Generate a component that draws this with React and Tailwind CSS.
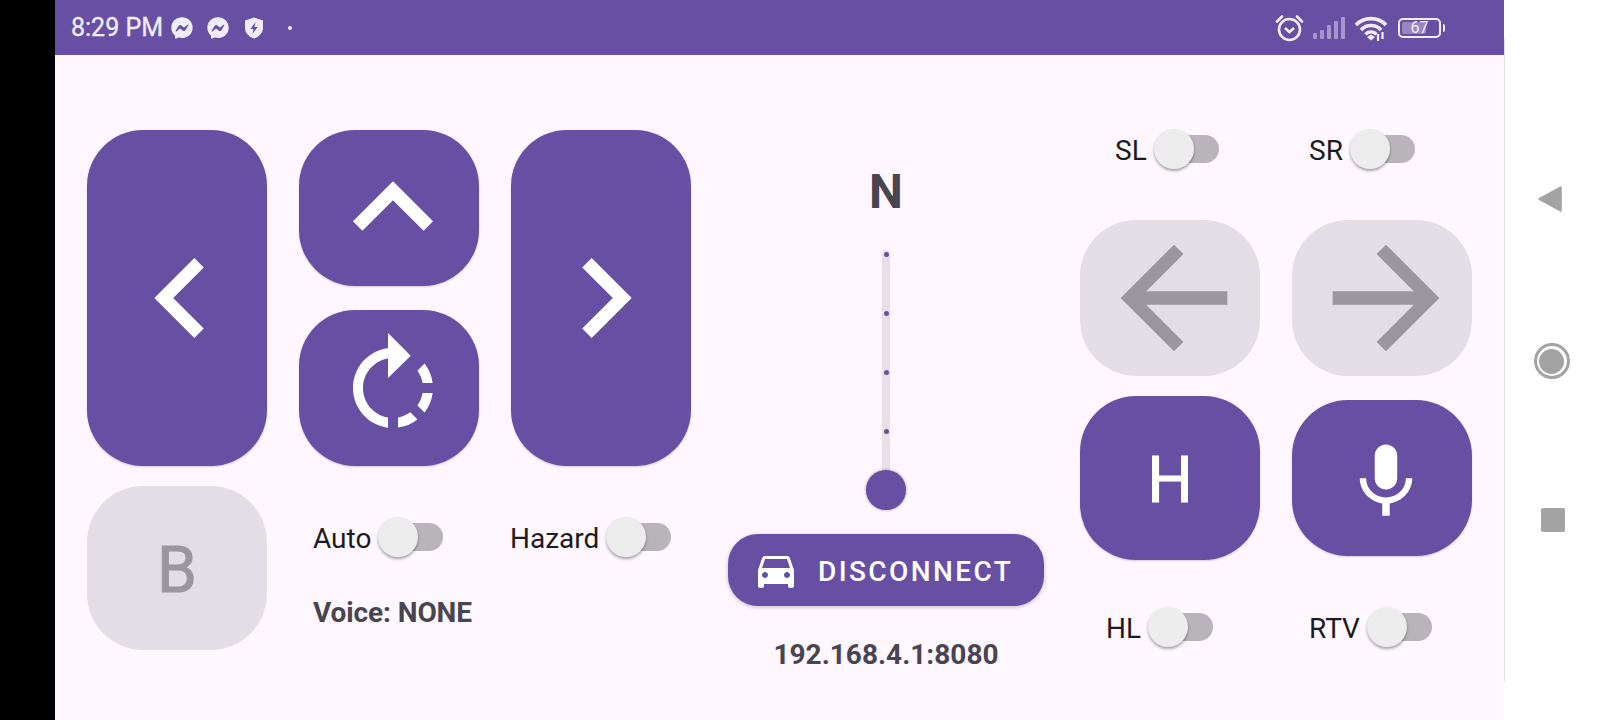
import { FaFacebookMessenger } from 'react-icons/fa';

function Icon({ d, size, className = 'fill-white' }) {
  return (
    <svg viewBox="0 0 24 24" width={size} height={size} className={`shrink-0 ${className}`}>
      <path d={d} />
    </svg>
  );
}

const paths = {
  left: 'M15.41 16.59L10.83 12l4.58-4.59L14 6l-6 6 6 6 1.41-1.41z',
  right: 'M8.59 16.59L13.17 12 8.59 7.41 10 6l6 6-6 6-1.41-1.41z',
  up: 'M7.41 15.41L12 10.83l4.59 4.58L18 14l-6-6-6 6z',
  rotate: 'M15.55 5.55L11 1v3.07C7.06 4.56 4 7.92 4 12s3.05 7.44 7 7.93v-2.02c-2.84-.48-5-2.94-5-5.91s2.16-5.43 5-5.91V10l4.55-4.45zM19.93 11c-.17-1.39-.72-2.73-1.62-3.89l-1.42 1.42c.54.75.88 1.6 1.02 2.47h2.02zM13 17.9v2.02c1.39-.17 2.74-.71 3.9-1.61l-1.44-1.44c-.75.54-1.59.89-2.46 1.03zm3.89-2.42l1.42 1.41c.9-1.16 1.45-2.5 1.62-3.89h-2.02c-.14.87-.48 1.72-1.02 2.48z',
  back: 'M20 11H7.83l5.59-5.59L12 4l-8 8 8 8 1.41-1.41L7.83 13H20v-2z',
  forward: 'M12 4l-1.41 1.41L16.17 11H4v2h12.17l-5.58 5.59L12 20l8-8z',
  mic: 'M12 14c1.66 0 2.99-1.34 2.99-3L15 5c0-1.66-1.34-3-3-3S9 3.34 9 5v6c0 1.66 1.34 3 3 3zm5.3-3c0 3-2.54 5.1-5.3 5.1S6.7 14 6.7 11H5c0 3.41 2.72 6.23 6 6.72V21h2v-3.28c3.28-.48 6-3.3 6-6.72h-1.7z',
  car: 'M18.92 6.01C18.72 5.42 18.16 5 17.5 5h-11c-.66 0-1.21.42-1.42 1.01L3 12v8c0 .55.45 1 1 1h1c.55 0 1-.45 1-1v-1h12v1c0 .55.45 1 1 1h1c.55 0 1-.45 1-1v-8l-2.08-5.99zM6.5 16c-.83 0-1.5-.67-1.5-1.5S5.67 13 6.5 13s1.5.67 1.5 1.5S7.33 16 6.5 16zm11 0c-.83 0-1.5-.67-1.5-1.5s.67-1.5 1.5-1.5 1.5.67 1.5 1.5-.67 1.5-1.5 1.5zM5 11l1.5-4.5h11L19 11H5z',
};

function PadButton({ disabled, className = '', children }) {
  return (
    <div
      className={`w-[180px] flex items-center justify-center rounded-[56px] ${
        disabled ? 'bg-[#e3dee5]' : 'bg-[#6750a4] shadow-[0_1px_2px_rgba(0,0,0,0.18)]'
      } ${className}`}
    >
      {children}
    </div>
  );
}

function Toggle({ label, className = '' }) {
  return (
    <div className={`flex items-center gap-[7px] ${className}`}>
      <span className="translate-y-[2px] text-[28px] leading-[40px] text-[#1d1b20]">{label}</span>
      <div className="relative w-[65px] h-[40px] flex items-center justify-end">
        <div className="w-[45px] h-[28px] rounded-r-full bg-[#b9b4ba]" />
        <div className="absolute left-0 top-0 w-[40px] h-[40px] rounded-full bg-[#ececec] shadow-[0_2px_3px_rgba(0,0,0,0.35)]" />
      </div>
    </div>
  );
}

function StatusBar() {
  return (
    <div className="h-[55px] shrink-0 bg-[#6750a4] flex items-center text-[#f1edf7]">
      <span className="ml-[16px] text-[25px] leading-none w-[100px] whitespace-nowrap [-webkit-text-stroke:0.3px_#f1edf7]">8:29 PM</span>
      <FaFacebookMessenger size={22} className="text-[#f1edf7]" />
      <FaFacebookMessenger size={22} className="text-[#f1edf7] ml-[14px]" />
      <svg viewBox="0 0 20 22" width="20" height="22" className="ml-[16px] -translate-x-px">
        <path d="M10 0.5L19 3.5V11C19 16 15 20 10 21.5C5 20 1 16 1 11V3.5Z" fill="#f1edf7" />
        <path d="M11.5 5L6.5 12H9.5L8.5 17L13.5 10H10.5Z" fill="#6750a4" />
      </svg>
      <div className="ml-[24px] w-[4px] h-[4px] rounded-full bg-[#f1edf7] -translate-x-px" />
      <div className="flex-1" />
      {/* alarm */}
      <svg viewBox="0 0 29 28" width="29" height="28" className="-ml-[2px]">
        <circle cx="14.5" cy="15.5" r="10.5" fill="none" stroke="#f1edf7" strokeWidth="2.6" />
        <path d="M10 14L14.5 18L19 14" fill="none" stroke="#f1edf7" strokeWidth="2.6" />
        <path d="M2 7.5L7 2.5M22 2.5L27 7.5" fill="none" stroke="#f1edf7" strokeWidth="2.6" strokeLinecap="round" />
      </svg>
      {/* signal */}
      <div className="ml-[9px] flex items-end gap-[2.5px] h-[23px] opacity-45">
        <div className="w-[4.5px] h-[6px] bg-[#f1edf7] rounded-[1px]" />
        <div className="w-[4.5px] h-[9px] bg-[#f1edf7] rounded-[1px]" />
        <div className="w-[4.5px] h-[14px] bg-[#f1edf7] rounded-[1px]" />
        <div className="w-[4.5px] h-[18px] bg-[#f1edf7] rounded-[1px]" />
        <div className="w-[4.5px] h-[22px] bg-[#f1edf7] rounded-[1px]" />
      </div>
      {/* wifi */}
      <svg viewBox="0 0 34 26" width="34" height="26" className="ml-[9px]">
        <path d="M2 10C10 1.5 24 1.5 32 10" fill="none" stroke="#f1edf7" strokeWidth="3.6" />
        <path d="M7 15C12 9 22 9 27 15" fill="none" stroke="#f1edf7" strokeWidth="3.6" />
        <path d="M11.5 19.5C14.5 16 19.5 16 22.5 19.5" fill="none" stroke="#f1edf7" strokeWidth="3.4" />
        <path d="M13 22L17 19.5L21 22L17 25.5Z" fill="#f1edf7" />
        <path d="M24 19V26M28.5 17V24" stroke="#f1edf7" strokeWidth="2.2" />
      </svg>
      {/* battery */}
      <div className="ml-[10px] flex items-center mr-[59px]">
        <div className="relative w-[43px] h-[20px] rounded-[5px] border-2 border-[#f1edf7] flex items-center justify-center">
          <div className="absolute left-[2px] top-[2px] bottom-[2px] w-[24px] rounded-[2px] bg-[#f1edf7]/35" />
          <span className="relative text-[16px] leading-none text-[#f1edf7]">67</span>
        </div>
        <div className="ml-[2px] w-[2px] h-[8px] rounded-r-sm bg-[#f1edf7]" />
      </div>
    </div>
  );
}

function LeftPanel() {
  return (
    <div className="ml-[32px] pt-[75px] w-[604px] shrink-0">
      <div className="flex gap-[32px] h-[336px]">
        <PadButton className="pl-2">
          <Icon d={paths.left} size={160} />
        </PadButton>
        <div className="flex flex-col gap-[24px]">
          <PadButton className="h-[156px] pl-2">
            <Icon d={paths.up} size={160} />
          </PadButton>
          <PadButton className="h-[156px] pl-2">
            <Icon d={paths.rotate} size={120} />
          </PadButton>
        </div>
        <PadButton className="pl-2">
          <Icon d={paths.right} size={160} />
        </PadButton>
      </div>
      <div className="flex mt-[20px]">
        <PadButton disabled className="h-[164px]">
          <span className="text-[64px] leading-none text-[#9b969d] pt-[5px] [-webkit-text-stroke:1px_#9b969d]">B</span>
        </PadButton>
        <div className="ml-[46px] pt-[31px]">
          <div className="flex">
            <Toggle label="Auto" className="w-[197px]" />
            <Toggle label="Hazard" />
          </div>
          <div className="mt-[36px] text-[28px] leading-[40px] font-bold tracking-[-0.1px] text-[#49454f]">Voice: NONE</div>
        </div>
      </div>
    </div>
  );
}

function MiddlePanel() {
  return (
    <div className="ml-[37px] w-[316px] shrink-0 flex flex-col items-center pt-[109px]">
      <div className="text-[48px] leading-[56px] font-bold text-[#49454f]">N</div>
      <div className="relative mt-[30px] w-[40px] h-[260px] flex justify-center">
        <div className="w-[8px] h-[244px] rounded-full bg-[#e5e0e8] flex flex-col items-center gap-[54px] pt-[2px]">
          <div className="w-[5px] h-[5px] shrink-0 rounded-full bg-[#6750a4]" />
          <div className="w-[5px] h-[5px] shrink-0 rounded-full bg-[#6750a4]" />
          <div className="w-[5px] h-[5px] shrink-0 rounded-full bg-[#6750a4]" />
          <div className="w-[5px] h-[5px] shrink-0 rounded-full bg-[#6750a4]" />
        </div>
        <div className="absolute left-0 bottom-0 w-[40px] h-[40px] rounded-full bg-[#6750a4] shadow-[0_0_3px_rgba(0,0,0,0.4)]" />
      </div>
      <div className="mt-[24px] w-[316px] h-[72px] rounded-[30px] bg-[#6750a4] shadow-[0_1px_4px_rgba(0,0,0,0.25)] flex items-center pl-[24px] text-white">
        <Icon d={paths.car} size={48} />
        <span className="ml-[18px] pt-[4px] text-[28px] leading-none font-medium tracking-[2.4px]">DISCONNECT</span>
      </div>
      <div className="mt-[29px] text-[28px] leading-[40px] font-bold text-[#49454f]">192.168.4.1:8080</div>
    </div>
  );
}

function RightPanel() {
  return (
    <div className="ml-[36px] w-[392px] shrink-0 pt-[74px]">
      <div className="flex">
        <Toggle label="SL" className="w-[212px] pl-[35px]" />
        <Toggle label="SR" className="pl-[17px]" />
      </div>
      <div className="flex gap-[32px] mt-[51px]">
        <PadButton disabled className="h-[156px] pl-2">
          <Icon d={paths.back} size={160} className="fill-[#9b969d]" />
        </PadButton>
        <PadButton disabled className="h-[156px] pl-2">
          <Icon d={paths.forward} size={160} className="fill-[#9b969d]" />
        </PadButton>
      </div>
      <div className="flex gap-[32px] mt-[20px] items-center">
        <PadButton className="h-[164px]">
          <span className="text-[64px] leading-none text-white pt-[5px] [-webkit-text-stroke:1px_#ffffff]">H</span>
        </PadButton>
        <PadButton className="h-[156px] pl-2 pt-[7px]">
          <Icon d={paths.mic} size={90} />
        </PadButton>
      </div>
      <div className="flex mt-[47px]">
        <Toggle label="HL" className="w-[212px] pl-[26px]" />
        <Toggle label="RTV" className="pl-[17px]" />
      </div>
    </div>
  );
}

function NavBar() {
  return (
    <div className="relative w-[96px] shrink-0 flex flex-col items-center bg-white">
      <div className="absolute left-0 top-[38px] h-[644px] w-px bg-[#e4e2e6]" />
      <svg viewBox="0 0 24 28" width="24" height="28" className="mt-[185px] -ml-[4px]">
        <path d="M23 2V26L1 14Z" fill="#a3a3a3" stroke="#a3a3a3" strokeWidth="1.5" strokeLinejoin="round" />
      </svg>
      <div className="mt-[130px] -ml-[1px] w-[36px] h-[36px] rounded-full border-[3px] border-[#a3a3a3] flex items-center justify-center">
        <div className="w-[25px] h-[25px] rounded-full bg-[#a3a3a3]" />
      </div>
      <div className="mt-[129px] ml-[1px] w-[24px] h-[24px] rounded-[2px] bg-[#a3a3a3]" />
    </div>
  );
}

export default function App() {
  return (
    <div className="w-[1600px] h-[720px] flex overflow-hidden font-['Roboto',sans-serif] bg-white">
      <div className="w-[55px] shrink-0 bg-black" />
      <div className="w-[1449px] shrink-0 flex flex-col bg-[#fef7ff]">
        <StatusBar />
        <div className="flex-1 flex items-start">
          <LeftPanel />
          <MiddlePanel />
          <RightPanel />
        </div>
      </div>
      <NavBar />
    </div>
  );
}
